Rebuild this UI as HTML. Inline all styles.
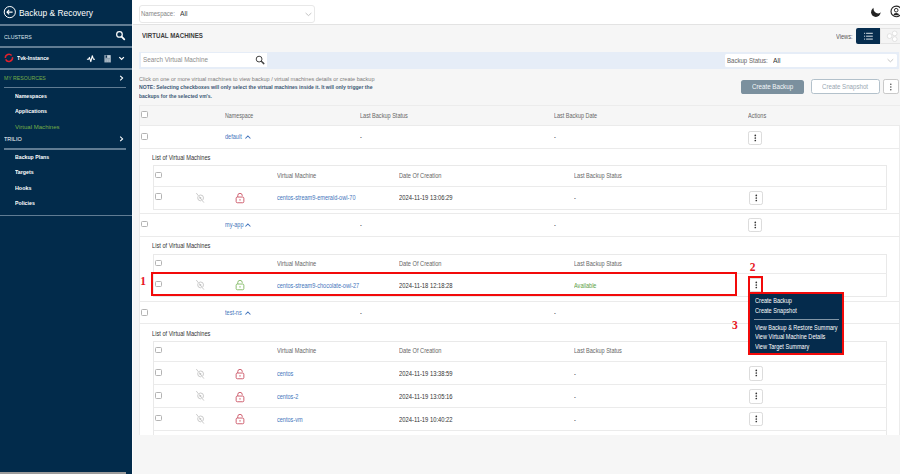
<!DOCTYPE html>
<html><head><meta charset="utf-8">
<style>
*{box-sizing:border-box;margin:0;padding:0}
html,body{width:900px;height:474px;overflow:hidden;background:#f6f6f6;font-family:"Liberation Sans",sans-serif;color:#333}
.a{position:absolute}
.t{position:absolute;white-space:nowrap;line-height:1;transform-origin:0 0}
.chk{position:absolute;width:7px;height:6.6px;border:0.9px solid #b3b3b3;border-radius:1.4px;background:#fff}
.keb{position:absolute;width:14px;height:14.3px;border:0.8px solid #dcdcdc;border-radius:2.2px;background:#fff}
.keb i{position:absolute;left:5.35px;width:1.75px;height:1.75px;background:#333;border-radius:50%}
.hl{position:absolute;height:1px;background:#ebebeb}
.red{position:absolute;border:2.4px solid #f20a0a}
</style></head><body>
<div class="a" style="left:0;top:0;width:132px;height:474px;background:#022b4b"></div>
<div class="a" style="left:132px;top:0;width:1px;height:474px;background:#fdfdfd"></div>
<svg class="a" style="left:0;top:0" width="132" height="474" viewBox="0 0 132 474">
<circle cx="9.8" cy="12.1" r="5.6" fill="none" stroke="#fff" stroke-width="1"/>
<path d="M12.6 12.1H7M9.2 9.8L6.9 12.1L9.2 14.4" fill="none" stroke="#fff" stroke-width="1.1" stroke-linejoin="round"/>
<circle cx="119.46" cy="34.42" r="2.8" fill="none" stroke="#fff" stroke-width="1.2"/>
<path d="M121.6 36.6L124.3 39.3" stroke="#fff" stroke-width="1.8" stroke-linecap="round"/>
<path d="M5.33 57.9A3.6 3.6 0 0 1 11.65 55.54" fill="none" stroke="#e3202c" stroke-width="1.45"/>
<path d="M12.46 57.21A3.6 3.6 0 0 1 5.67 59.42" fill="none" stroke="#e3202c" stroke-width="1.45"/>
<path d="M86.9 59.3H88.6L89.4 57.4L90.8 61.6L92.3 55.7L93.5 59.3H95" fill="none" stroke="#fff" stroke-width="1.1" stroke-linejoin="round"/>
<rect x="104.3" y="54.9" width="6.7" height="7.6" rx="0.5" fill="#8ea1b1"/>
<rect x="105.7" y="55.5" width="1.3" height="2.2" fill="#0d3050"/>
<rect x="107.4" y="55.4" width="2.6" height="2.4" fill="#c2ced8"/>
<rect x="105.3" y="59.2" width="4.7" height="2.8" fill="#a9b8c4"/>
<path d="M106.6 59.4V62M108.6 59.4V62" stroke="#7d92a3" stroke-width="0.4"/>
<path d="M119.3 57.1L121.6 59.4L123.9 57.1" fill="none" stroke="#fff" stroke-width="1.25"/>
<path d="M120.2 75.9L122.6 78.1L120.2 80.3" fill="none" stroke="#fff" stroke-width="1.1"/>
<path d="M120.2 136.7L122.6 138.9L120.2 141.1" fill="none" stroke="#fff" stroke-width="1.1"/>
</svg>
<div class="a" style="left:0px;top:24px;width:132px;height:1.8px;background:#607c93"></div>
<div class="a" style="left:0px;top:46px;width:132px;height:1.8px;background:#607c93"></div>
<div class="a" style="left:0px;top:68.2px;width:132px;height:1.8px;background:#607c93"></div>
<div class="a" style="left:4.4px;top:86.6px;width:121.8px;height:1.4px;background:#607c93"></div>
<div class="a" style="left:4.2px;top:148.4px;width:122px;height:1.4px;background:#607c93"></div>
<div class="a" style="left:0px;top:215.2px;width:132px;height:1.2px;background:#607c93"></div>
<div class="a" style="left:0;top:472px;width:126px;height:2px;background:#9b9b9b"></div>
<div class="t" style="left:19.40px;top:7.81px;font-size:9.4px;color:#ffffff;transform:scaleX(0.8987);">Backup &amp; Recovery</div>
<div class="t" style="left:4.20px;top:34.81px;font-size:5.3px;color:#dde5ec;transform:scaleX(0.9800);">CLUSTERS</div>
<div class="t" style="left:16.90px;top:55.57px;font-size:5.6px;color:#ffffff;font-weight:bold;transform:scaleX(0.9356);">Tvk-Instance</div>
<div class="t" style="left:4.40px;top:75.52px;font-size:5.7px;color:#74ad47;transform:scaleX(0.9078);">MY RESOURCES</div>
<div class="t" style="left:14.90px;top:92.67px;font-size:6px;color:#ffffff;font-weight:bold;transform:scaleX(0.8691);">Namespaces</div>
<div class="t" style="left:14.90px;top:108.37px;font-size:6px;color:#ffffff;font-weight:bold;transform:scaleX(0.8857);">Applications</div>
<div class="t" style="left:14.90px;top:123.57px;font-size:6px;color:#74ad47;transform:scaleX(1.0079);">Virtual Machines</div>
<div class="t" style="left:4.20px;top:136.42px;font-size:6px;color:#ffffff;transform:scaleX(0.9150);">TRILIO</div>
<div class="t" style="left:14.80px;top:154.67px;font-size:5.8px;color:#ffffff;font-weight:bold;transform:scaleX(0.8966);">Backup Plans</div>
<div class="t" style="left:14.80px;top:170.17px;font-size:5.8px;color:#ffffff;font-weight:bold;transform:scaleX(0.9066);">Targets</div>
<div class="t" style="left:14.80px;top:186.17px;font-size:5.8px;color:#ffffff;font-weight:bold;transform:scaleX(0.9256);">Hooks</div>
<div class="t" style="left:14.80px;top:201.37px;font-size:5.8px;color:#ffffff;font-weight:bold;transform:scaleX(0.9032);">Policies</div>
<div class="a" style="left:133px;top:0;width:767px;height:24.8px;background:#fff;border-bottom:1px solid #e3e3e3"></div>
<div class="a" style="left:138.7px;top:5.4px;width:176.8px;height:17.6px;border:1px solid #e8e8e8;border-radius:3px;background:#fff"></div>
<div class="t" style="left:141.20px;top:11.23px;font-size:6.8px;color:#858585;transform:scaleX(0.8885);">Namespace:</div>
<div class="t" style="left:179.60px;top:10.83px;font-size:6.9px;color:#333;transform:scaleX(0.9776);">All</div>
<svg class="a" style="left:0;top:0" width="900" height="100" viewBox="0 0 900 100">
<path d="M305.6 13L308.5 15.6L311.4 13" fill="none" stroke="#aaa" stroke-width="0.7"/>
<circle cx="875.85" cy="12.15" r="4.75" fill="#222"/>
<circle cx="878.1" cy="8.8" r="4.6" fill="#fff"/>
<circle cx="896.3" cy="11.4" r="5.3" fill="none" stroke="#222" stroke-width="1.1"/>
<circle cx="896.2" cy="10.2" r="1.8" fill="none" stroke="#222" stroke-width="0.95"/>
<path d="M893.3 15.3Q893.6 13.1 896.2 13.1Q898.8 13.1 899.1 15.3Z" fill="#222"/>
</svg>
<div class="t" style="left:142.20px;top:32.34px;font-size:7.2px;color:#3d3d3d;font-weight:bold;transform:scaleX(0.8534);">VIRTUAL MACHINES</div>
<div class="t" style="left:835.60px;top:33.83px;font-size:6.3px;color:#555;transform:scaleX(0.9003);">Views:</div>
<div class="a" style="left:856.1px;top:28.3px;width:24px;height:15.8px;background:#062d4f;border-radius:2px 0 0 2px"></div>
<div class="a" style="left:880px;top:28.3px;width:22px;height:15.8px;background:#f4f4f4;border:1px solid #e4e4e4"></div>
<svg class="a" style="left:0;top:0" width="900" height="100" viewBox="0 0 900 100">
<g fill="#e9eef2"><rect x="864.1" y="32.8" width="1" height="1"/><rect x="866.1" y="32.8" width="6.7" height="0.95"/>
<rect x="864.1" y="35.7" width="1" height="1"/><rect x="866.1" y="35.7" width="6.7" height="0.95"/>
<rect x="864.1" y="38.6" width="1" height="1"/><rect x="866.1" y="38.6" width="6.7" height="0.95"/></g>
<g fill="#fff" stroke="#d9d9d9" stroke-width="0.7"><circle cx="889.6" cy="36.1" r="2.4"/><circle cx="894.7" cy="33.4" r="2.4"/><circle cx="894.7" cy="39.1" r="2.4"/></g>
</svg>
<div class="a" style="left:139px;top:52px;width:760px;height:17px;background:#e6edf7"></div>
<div class="a" style="left:140.7px;top:53.4px;width:126.8px;height:13.3px;background:#fff"></div>
<div class="t" style="left:142.90px;top:57.48px;font-size:6.8px;color:#8d8d8d;transform:scaleX(0.9251);">Search Virtual Machine</div>
<svg class="a" style="left:0;top:0" width="900" height="100" viewBox="0 0 900 100">
<circle cx="259.1" cy="59.1" r="2.9" fill="none" stroke="#444" stroke-width="1"/>
<path d="M261.3 61.3L263.8 63.6" stroke="#444" stroke-width="1.5" stroke-linecap="round"/>
</svg>
<div class="a" style="left:725.4px;top:53.6px;width:171.6px;height:13px;background:#fff;border-radius:1.5px"></div>
<svg class="a" style="left:0;top:0" width="900" height="100" viewBox="0 0 900 100"><path d="M887.6 59.2L890.4 61.8L893.2 59.2" fill="none" stroke="#aaa" stroke-width="0.7"/></svg>
<div class="t" style="left:727.20px;top:57.68px;font-size:6.6px;color:#666;transform:scaleX(0.9198);">Backup Status:</div>
<div class="t" style="left:773.20px;top:58.03px;font-size:6.9px;color:#333;transform:scaleX(0.9776);">All</div>
<div class="t" style="left:139.10px;top:76.12px;font-size:6.0px;color:#7d7d7d;transform:scaleX(0.9219);">Click on one or more virtual machines to view backup / virtual machines details or create backup</div>
<div class="t" style="left:139.10px;top:84.47px;font-size:6.0px;color:#3d5875;font-weight:bold;transform:scaleX(0.8499);">NOTE: Selecting checkboxes will only select the virtual machines inside it. It will only trigger the</div>
<div class="t" style="left:139.10px;top:93.07px;font-size:6.0px;color:#3d5875;font-weight:bold;transform:scaleX(0.8377);">backups for the selected vm's.</div>
<div class="a" style="left:740.8px;top:79.5px;width:63.4px;height:14.5px;background:#7b909e;border-radius:2.6px"></div>
<div class="t" style="left:751.90px;top:84.08px;font-size:6.8px;color:#f4f7f9;transform:scaleX(0.9140);">Create Backup</div>
<div class="a" style="left:810.8px;top:79.3px;width:69px;height:15.1px;background:#fff;border:1px solid #b3c1cb;border-radius:2.6px"></div>
<div class="t" style="left:822.10px;top:83.68px;font-size:6.9px;color:#98a6b1;transform:scaleX(0.8894);">Create Snapshot</div>
<div class="keb" style="left:883.1px;top:79.3px;width:15.7px;height:15px;border-color:#c9c9c9"></div><svg class="a" style="left:0;top:0" width="900" height="100" viewBox="0 0 900 100"><g fill="#444"><circle cx="890.8" cy="84.2" r="0.75"/><circle cx="890.8" cy="86.9" r="0.75"/><circle cx="890.8" cy="89.7" r="0.75"/></g></svg>
<div class="a" style="left:138.5px;top:105px;width:761px;height:329.5px;background:#fff;border:1px solid #ececec;border-bottom:none"></div>
<div class="a" style="left:139.5px;top:106px;width:760px;height:19.5px;background:#f6f6f6"></div>
<div class="chk" style="left:141.2px;top:111.3px"></div>
<div class="t" style="left:225.00px;top:112.78px;font-size:6.4px;color:#666;transform:scaleX(0.8297);">Namespace</div>
<div class="t" style="left:359.80px;top:112.78px;font-size:6.4px;color:#666;transform:scaleX(0.8700);">Last Backup Status</div>
<div class="t" style="left:553.90px;top:112.78px;font-size:6.4px;color:#666;transform:scaleX(0.8543);">Last Backup Date</div>
<div class="t" style="left:748.00px;top:112.78px;font-size:6.4px;color:#666;transform:scaleX(0.8700);">Actions</div>
<div class="hl" style="left:139.5px;top:125.0px;width:760px"></div>
<div class="hl" style="left:139.5px;top:148.2px;width:760px"></div>
<div class="chk" style="left:141.2px;top:133.4px"></div>
<div class="t" style="left:225.00px;top:134.28px;font-size:6.4px;color:#4475bb;transform:scaleX(0.8700);">default</div>
<svg class="a" style="left:243.8px;top:134.4px" width="8" height="6" viewBox="0 0 8 6"><path d="M1.4 4.5L3.9 1.9L6.4 4.5" fill="none" stroke="#4475bb" stroke-width="1.05"/></svg>
<div class="t" style="left:360.00px;top:134.48px;font-size:6.4px;color:#333;transform:scaleX(0.8700);">-</div>
<div class="t" style="left:553.90px;top:134.48px;font-size:6.4px;color:#333;transform:scaleX(0.8700);">-</div>
<div class="keb" style="left:747.5px;top:130.7px"></div><svg class="a" style="left:747.5px;top:130.7px" width="14" height="14" viewBox="0 0 14 14"><g fill="#333"><circle cx="7.3" cy="4.4" r="0.85"/><circle cx="7.3" cy="7" r="0.85"/><circle cx="7.3" cy="9.5" r="0.85"/></g></svg>
<div class="t" style="left:152.00px;top:154.93px;font-size:6.3px;color:#333;transform:scaleX(0.8987);">List of Virtual Machines</div>
<div class="a" style="left:152.5px;top:165.39999999999998px;width:734.5px;height:44.4px;border:1px solid #e9e9e9;background:#fff"></div>
<div class="chk" style="left:154.8px;top:171.49999999999997px"></div>
<div class="t" style="left:276.70px;top:172.98px;font-size:6.4px;color:#666;transform:scaleX(0.8945);">Virtual Machine</div>
<div class="t" style="left:399.20px;top:172.98px;font-size:6.4px;color:#666;transform:scaleX(0.8863);">Date Of Creation</div>
<div class="t" style="left:574.00px;top:172.98px;font-size:6.4px;color:#666;transform:scaleX(0.8700);">Last Backup Status</div>
<div class="hl" style="left:153.5px;top:185.89999999999998px;width:733px"></div>
<div class="chk" style="left:154.8px;top:193.29999999999998px"></div>
<svg class="a" style="left:194.1px;top:191.7px" width="12" height="12" viewBox="0 0 12 12"><circle cx="6.6" cy="5.9" r="2.9" fill="none" stroke="#bdbdbd" stroke-width="0.8"/><path d="M2.3 1.1L9.9 10.6" stroke="#fff" stroke-width="1.3"/><path d="M2.3 1.1L9.9 10.6" stroke="#b5b5b5" stroke-width="0.7"/><circle cx="6.4" cy="5.9" r="0.95" fill="#c2c2c2"/></svg>
<svg class="a" style="left:234.2px;top:191.79999999999998px" width="12" height="12" viewBox="0 0 12 12"><path d="M3.75 5V3.6A2.25 2.25 0 0 1 8.25 3.6V4.2" fill="none" stroke="#c8475a" stroke-width="0.85"/><rect x="2.15" y="5.05" width="7.7" height="5.7" rx="1.2" fill="none" stroke="#c8475a" stroke-width="0.85"/><rect x="5.55" y="7.1" width="0.9" height="1.5" fill="#c8475a"/></svg>
<div class="t" style="left:276.70px;top:195.48px;font-size:6.4px;color:#4475bb;transform:scaleX(0.8700);">centos-stream9-emerald-owl-70</div>
<div class="t" style="left:399.20px;top:195.48px;font-size:6.4px;color:#333;transform:scaleX(0.9104);">2024-11-19 13:06:29</div>
<div class="t" style="left:574.00px;top:195.48px;font-size:6.4px;color:#333;transform:scaleX(0.8700);">-</div>
<div class="keb" style="left:749.2px;top:190.59999999999997px"></div><svg class="a" style="left:749.2px;top:190.59999999999997px" width="14" height="14" viewBox="0 0 14 14"><g fill="#333"><circle cx="7.3" cy="4.4" r="0.85"/><circle cx="7.3" cy="7" r="0.85"/><circle cx="7.3" cy="9.5" r="0.85"/></g></svg>
<div class="hl" style="left:139.5px;top:212.5px;width:760px"></div>
<div class="hl" style="left:139.5px;top:236.3px;width:760px"></div>
<div class="chk" style="left:141.2px;top:220.9px"></div>
<div class="t" style="left:225.00px;top:222.08px;font-size:6.4px;color:#4475bb;transform:scaleX(0.8700);">my-app</div>
<svg class="a" style="left:243.8px;top:222.20000000000002px" width="8" height="6" viewBox="0 0 8 6"><path d="M1.4 4.5L3.9 1.9L6.4 4.5" fill="none" stroke="#4475bb" stroke-width="1.05"/></svg>
<div class="t" style="left:360.00px;top:222.28px;font-size:6.4px;color:#333;transform:scaleX(0.8700);">-</div>
<div class="t" style="left:553.90px;top:222.28px;font-size:6.4px;color:#333;transform:scaleX(0.8700);">-</div>
<div class="keb" style="left:747.5px;top:218.2px"></div><svg class="a" style="left:747.5px;top:218.2px" width="14" height="14" viewBox="0 0 14 14"><g fill="#333"><circle cx="7.3" cy="4.4" r="0.85"/><circle cx="7.3" cy="7" r="0.85"/><circle cx="7.3" cy="9.5" r="0.85"/></g></svg>
<div class="t" style="left:152.00px;top:243.03px;font-size:6.3px;color:#333;transform:scaleX(0.8987);">List of Virtual Machines</div>
<div class="a" style="left:152.5px;top:253.5px;width:734.5px;height:43.4px;border:1px solid #e9e9e9;background:#fff"></div>
<div class="chk" style="left:154.8px;top:259.6px"></div>
<div class="t" style="left:276.70px;top:261.08px;font-size:6.4px;color:#666;transform:scaleX(0.8945);">Virtual Machine</div>
<div class="t" style="left:399.20px;top:261.08px;font-size:6.4px;color:#666;transform:scaleX(0.8863);">Date Of Creation</div>
<div class="t" style="left:574.00px;top:261.08px;font-size:6.4px;color:#666;transform:scaleX(0.8700);">Last Backup Status</div>
<div class="hl" style="left:153.5px;top:273.0px;width:733px"></div>
<div class="chk" style="left:154.8px;top:280.59999999999997px"></div>
<svg class="a" style="left:194.1px;top:279.0px" width="12" height="12" viewBox="0 0 12 12"><circle cx="6.6" cy="5.9" r="2.9" fill="none" stroke="#bdbdbd" stroke-width="0.8"/><path d="M2.3 1.1L9.9 10.6" stroke="#fff" stroke-width="1.3"/><path d="M2.3 1.1L9.9 10.6" stroke="#b5b5b5" stroke-width="0.7"/><circle cx="6.4" cy="5.9" r="0.95" fill="#c2c2c2"/></svg>
<svg class="a" style="left:234.2px;top:279.09999999999997px" width="12" height="12" viewBox="0 0 12 12"><path d="M3.75 5V3.6A2.25 2.25 0 0 1 8.25 3.6V4.2" fill="none" stroke="#7ab55a" stroke-width="0.85"/><rect x="2.15" y="5.05" width="7.7" height="5.7" rx="1.2" fill="none" stroke="#7ab55a" stroke-width="0.85"/><rect x="5.55" y="7.1" width="0.9" height="1.5" fill="#7ab55a"/></svg>
<div class="t" style="left:276.70px;top:282.78px;font-size:6.4px;color:#4475bb;transform:scaleX(0.8700);">centos-stream9-chocolate-owl-27</div>
<div class="t" style="left:399.20px;top:282.78px;font-size:6.4px;color:#333;transform:scaleX(0.9104);">2024-11-18 12:18:28</div>
<div class="t" style="left:574.00px;top:282.78px;font-size:6.4px;color:#5ca043;transform:scaleX(0.8700);">Available</div>
<div class="keb" style="left:749.2px;top:277.9px"></div><svg class="a" style="left:749.2px;top:277.9px" width="14" height="14" viewBox="0 0 14 14"><g fill="#333"><circle cx="7.3" cy="4.4" r="0.85"/><circle cx="7.3" cy="7" r="0.85"/><circle cx="7.3" cy="9.5" r="0.85"/></g></svg>
<div class="hl" style="left:139.5px;top:300.6px;width:760px"></div>
<div class="hl" style="left:139.5px;top:323.4px;width:760px"></div>
<div class="chk" style="left:141.2px;top:309.0px"></div>
<div class="t" style="left:225.00px;top:309.68px;font-size:6.4px;color:#4475bb;transform:scaleX(0.8700);">test-ns</div>
<svg class="a" style="left:243.8px;top:309.8px" width="8" height="6" viewBox="0 0 8 6"><path d="M1.4 4.5L3.9 1.9L6.4 4.5" fill="none" stroke="#4475bb" stroke-width="1.05"/></svg>
<div class="t" style="left:360.00px;top:309.88px;font-size:6.4px;color:#333;transform:scaleX(0.8700);">-</div>
<div class="t" style="left:553.90px;top:309.88px;font-size:6.4px;color:#333;transform:scaleX(0.8700);">-</div>
<div class="keb" style="left:747.5px;top:306.3px"></div><svg class="a" style="left:747.5px;top:306.3px" width="14" height="14" viewBox="0 0 14 14"><g fill="#333"><circle cx="7.3" cy="4.4" r="0.85"/><circle cx="7.3" cy="7" r="0.85"/><circle cx="7.3" cy="9.5" r="0.85"/></g></svg>
<div class="t" style="left:152.00px;top:331.03px;font-size:6.3px;color:#333;transform:scaleX(0.8987);">List of Virtual Machines</div>
<div class="a" style="left:152.5px;top:340.59999999999997px;width:734.5px;height:113.1px;border:1px solid #e9e9e9;background:#fff"></div>
<div class="chk" style="left:154.8px;top:346.7px"></div>
<div class="t" style="left:276.70px;top:348.18px;font-size:6.4px;color:#666;transform:scaleX(0.8945);">Virtual Machine</div>
<div class="t" style="left:399.20px;top:348.18px;font-size:6.4px;color:#666;transform:scaleX(0.8863);">Date Of Creation</div>
<div class="t" style="left:574.00px;top:348.18px;font-size:6.4px;color:#666;transform:scaleX(0.8700);">Last Backup Status</div>
<div class="hl" style="left:153.5px;top:361.09999999999997px;width:733px"></div>
<div class="chk" style="left:154.8px;top:369.09999999999997px"></div>
<svg class="a" style="left:194.1px;top:367.5px" width="12" height="12" viewBox="0 0 12 12"><circle cx="6.6" cy="5.9" r="2.9" fill="none" stroke="#bdbdbd" stroke-width="0.8"/><path d="M2.3 1.1L9.9 10.6" stroke="#fff" stroke-width="1.3"/><path d="M2.3 1.1L9.9 10.6" stroke="#b5b5b5" stroke-width="0.7"/><circle cx="6.4" cy="5.9" r="0.95" fill="#c2c2c2"/></svg>
<svg class="a" style="left:234.2px;top:367.59999999999997px" width="12" height="12" viewBox="0 0 12 12"><path d="M3.75 5V3.6A2.25 2.25 0 0 1 8.25 3.6V4.2" fill="none" stroke="#c8475a" stroke-width="0.85"/><rect x="2.15" y="5.05" width="7.7" height="5.7" rx="1.2" fill="none" stroke="#c8475a" stroke-width="0.85"/><rect x="5.55" y="7.1" width="0.9" height="1.5" fill="#c8475a"/></svg>
<div class="t" style="left:276.70px;top:371.28px;font-size:6.4px;color:#4475bb;transform:scaleX(0.8700);">centos</div>
<div class="t" style="left:399.20px;top:371.28px;font-size:6.4px;color:#333;transform:scaleX(0.9104);">2024-11-19 13:38:59</div>
<div class="t" style="left:574.00px;top:371.28px;font-size:6.4px;color:#333;transform:scaleX(0.8700);">-</div>
<div class="keb" style="left:749.2px;top:366.4px"></div><svg class="a" style="left:749.2px;top:366.4px" width="14" height="14" viewBox="0 0 14 14"><g fill="#333"><circle cx="7.3" cy="4.4" r="0.85"/><circle cx="7.3" cy="7" r="0.85"/><circle cx="7.3" cy="9.5" r="0.85"/></g></svg>
<div class="hl" style="left:153.5px;top:383.99999999999994px;width:733px"></div>
<div class="chk" style="left:154.8px;top:391.99999999999994px"></div>
<svg class="a" style="left:194.1px;top:390.4px" width="12" height="12" viewBox="0 0 12 12"><circle cx="6.6" cy="5.9" r="2.9" fill="none" stroke="#bdbdbd" stroke-width="0.8"/><path d="M2.3 1.1L9.9 10.6" stroke="#fff" stroke-width="1.3"/><path d="M2.3 1.1L9.9 10.6" stroke="#b5b5b5" stroke-width="0.7"/><circle cx="6.4" cy="5.9" r="0.95" fill="#c2c2c2"/></svg>
<svg class="a" style="left:234.2px;top:390.49999999999994px" width="12" height="12" viewBox="0 0 12 12"><path d="M3.75 5V3.6A2.25 2.25 0 0 1 8.25 3.6V4.2" fill="none" stroke="#c8475a" stroke-width="0.85"/><rect x="2.15" y="5.05" width="7.7" height="5.7" rx="1.2" fill="none" stroke="#c8475a" stroke-width="0.85"/><rect x="5.55" y="7.1" width="0.9" height="1.5" fill="#c8475a"/></svg>
<div class="t" style="left:276.70px;top:394.18px;font-size:6.4px;color:#4475bb;transform:scaleX(0.8700);">centos-2</div>
<div class="t" style="left:399.20px;top:394.18px;font-size:6.4px;color:#333;transform:scaleX(0.9104);">2024-11-19 13:05:16</div>
<div class="t" style="left:574.00px;top:394.18px;font-size:6.4px;color:#333;transform:scaleX(0.8700);">-</div>
<div class="keb" style="left:749.2px;top:389.29999999999995px"></div><svg class="a" style="left:749.2px;top:389.29999999999995px" width="14" height="14" viewBox="0 0 14 14"><g fill="#333"><circle cx="7.3" cy="4.4" r="0.85"/><circle cx="7.3" cy="7" r="0.85"/><circle cx="7.3" cy="9.5" r="0.85"/></g></svg>
<div class="hl" style="left:153.5px;top:406.9px;width:733px"></div>
<div class="chk" style="left:154.8px;top:414.9px"></div>
<svg class="a" style="left:194.1px;top:413.3px" width="12" height="12" viewBox="0 0 12 12"><circle cx="6.6" cy="5.9" r="2.9" fill="none" stroke="#bdbdbd" stroke-width="0.8"/><path d="M2.3 1.1L9.9 10.6" stroke="#fff" stroke-width="1.3"/><path d="M2.3 1.1L9.9 10.6" stroke="#b5b5b5" stroke-width="0.7"/><circle cx="6.4" cy="5.9" r="0.95" fill="#c2c2c2"/></svg>
<svg class="a" style="left:234.2px;top:413.4px" width="12" height="12" viewBox="0 0 12 12"><path d="M3.75 5V3.6A2.25 2.25 0 0 1 8.25 3.6V4.2" fill="none" stroke="#c8475a" stroke-width="0.85"/><rect x="2.15" y="5.05" width="7.7" height="5.7" rx="1.2" fill="none" stroke="#c8475a" stroke-width="0.85"/><rect x="5.55" y="7.1" width="0.9" height="1.5" fill="#c8475a"/></svg>
<div class="t" style="left:276.70px;top:417.08px;font-size:6.4px;color:#4475bb;transform:scaleX(0.8700);">centos-vm</div>
<div class="t" style="left:399.20px;top:417.08px;font-size:6.4px;color:#333;transform:scaleX(0.9104);">2024-11-19 10:40:22</div>
<div class="t" style="left:574.00px;top:417.08px;font-size:6.4px;color:#333;transform:scaleX(0.8700);">-</div>
<div class="keb" style="left:749.2px;top:412.2px"></div><svg class="a" style="left:749.2px;top:412.2px" width="14" height="14" viewBox="0 0 14 14"><g fill="#333"><circle cx="7.3" cy="4.4" r="0.85"/><circle cx="7.3" cy="7" r="0.85"/><circle cx="7.3" cy="9.5" r="0.85"/></g></svg>
<div class="hl" style="left:153.5px;top:429.79999999999995px;width:733px"></div>
<div class="a" style="left:133px;top:434.5px;width:767px;height:40px;background:#f6f6f6"></div>
<div class="red" style="left:151.0px;top:272.1px;width:585.6px;height:24.4px"></div>
<div class="t" style="left:140.20px;top:275.99px;font-size:11.5px;color:#e8141c;font-weight:bold;font-family:'Liberation Serif',serif;">1</div>
<div class="t" style="left:749.80px;top:262.29px;font-size:11.5px;color:#e8141c;font-weight:bold;font-family:'Liberation Serif',serif;">2</div>
<div class="t" style="left:732.00px;top:320.49px;font-size:11.5px;color:#e8141c;font-weight:bold;font-family:'Liberation Serif',serif;">3</div>
<div class="a" style="left:748.2px;top:292.1px;width:95.7px;height:62.8px;background:#052b4c;border:2.3px solid #f20a0a"></div>
<div class="red" style="left:748.1px;top:276.3px;width:14.7px;height:18px;border-width:2.3px"></div>
<div class="t" style="left:754.80px;top:298.08px;font-size:6.6px;color:#ffffff;transform:scaleX(0.8450);">Create Backup</div>
<div class="t" style="left:754.80px;top:307.58px;font-size:6.6px;color:#ffffff;transform:scaleX(0.8450);">Create Snapshot</div>
<div class="t" style="left:754.80px;top:324.88px;font-size:6.6px;color:#ffffff;transform:scaleX(0.8326);">View Backup &amp; Restore Summary</div>
<div class="t" style="left:754.80px;top:334.18px;font-size:6.6px;color:#ffffff;transform:scaleX(0.8450);">View Virtual Machine Details</div>
<div class="t" style="left:754.80px;top:343.68px;font-size:6.6px;color:#ffffff;transform:scaleX(0.8450);">View Target Summary</div>
<div class="a" style="left:754px;top:318.6px;width:84.5px;height:1.1px;background:#8396a6"></div>
</body></html>
